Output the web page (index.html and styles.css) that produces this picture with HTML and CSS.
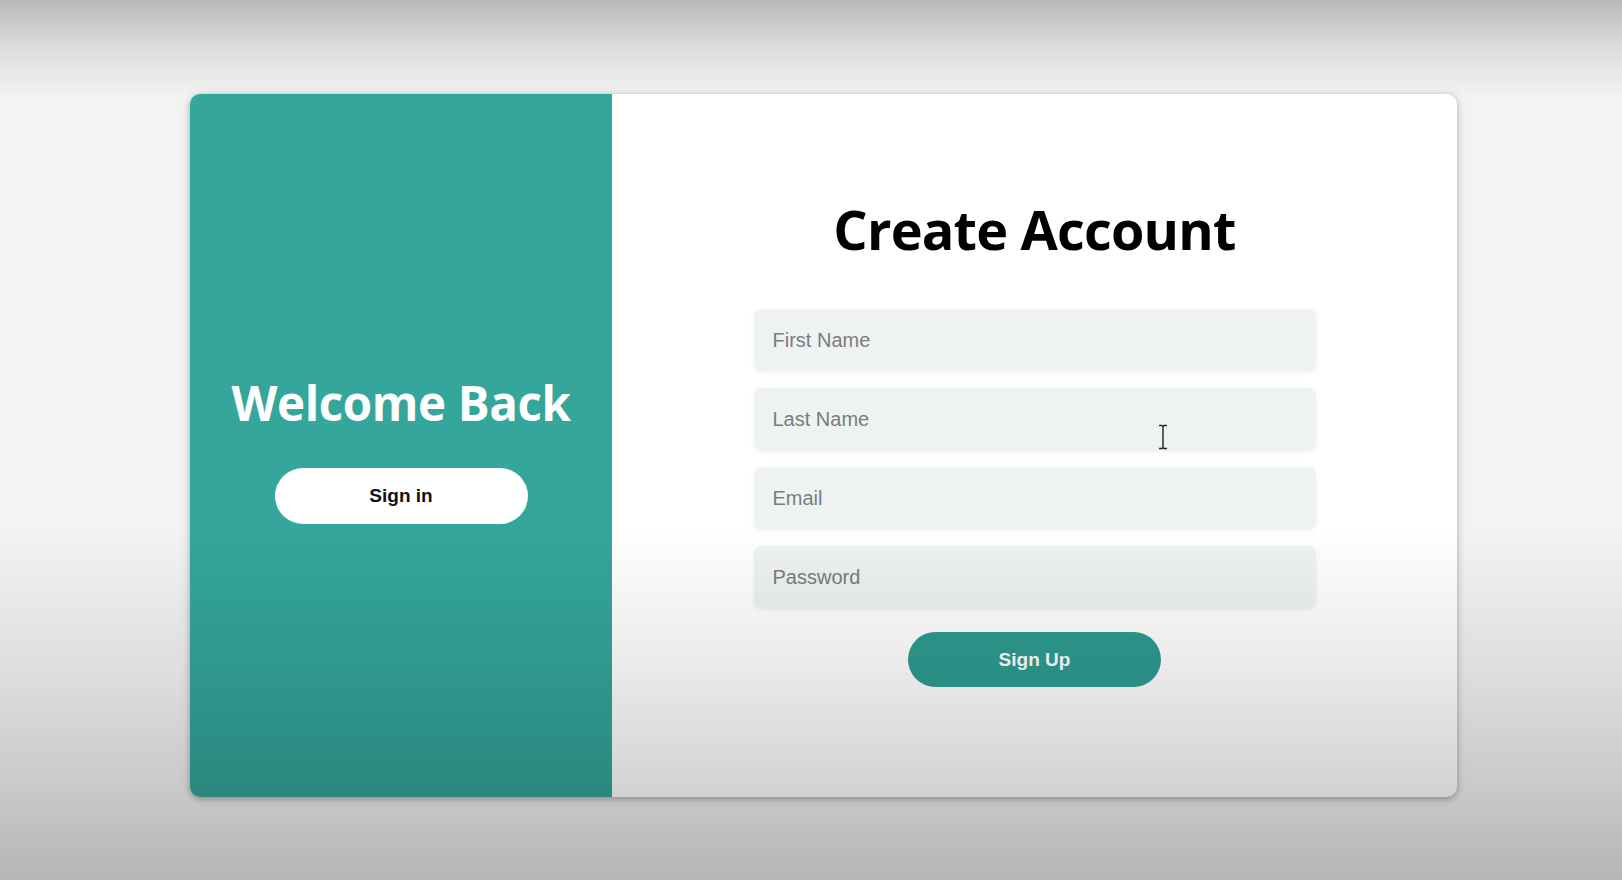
FILE: index.html
```html
<!DOCTYPE html>
<html lang="en">
<head>
<meta charset="utf-8">
<title>Create Account</title>
<link rel="stylesheet" href="styles.css">
</head>
<body>
<main class="stage">
  <section class="card">
    <div class="panel-left">
      <h2 class="welcome">Welcome Back</h2>
      <button class="btn-signin" type="button">Sign in</button>
    </div>
    <div class="panel-right">
      <h1 class="title">Create Account</h1>
      <form class="form">
        <input class="field" type="text" placeholder="First Name">
        <input class="field" type="text" placeholder="Last Name">
        <input class="field" type="email" placeholder="Email">
        <input class="field" type="password" placeholder="Password">
        <button class="btn-signup" type="button">Sign Up</button>
      </form>
    </div>
  </section>
</main>
<svg class="ibeam" width="10" height="26" viewBox="0 0 10 26" aria-hidden="true">
  <path d="M1 1.5h3l1 1 1-1h3M5 2.5v21M1 24.5h3l1-1 1 1h3" fill="none" stroke="#222" stroke-width="1.4"/>
</svg>
<div class="vignette"></div>
</body>
</html>
```

FILE: styles.css
```css
* { box-sizing: border-box; }

html, body {
  margin: 0;
  height: 880px;
  overflow: hidden;
}

body {
  background: #f3f3f3;
  font-family: "Liberation Sans", Arial, sans-serif;
}

.stage {
  display: flex;
  padding: 94px 0 0 190px;
}

.card {
  display: flex;
  width: 1267px;
  height: 703px;
  background: #ffffff;
  border-radius: 10px;
  overflow: hidden;
  box-shadow: 0 2px 6px rgba(0, 0, 0, 0.28), 0 0 14px rgba(0, 0, 0, 0.06);
}

.panel-left {
  width: 422px;
  flex: none;
  background: #34a69b;
  display: flex;
  flex-direction: column;
  align-items: center;
  justify-content: center;
  padding-top: 12px;
}

.welcome {
  margin: 0 0 41px;
  color: #ffffff;
  font-family: "Open Sans", "Noto Sans", sans-serif;
  font-weight: 700;
  font-size: 47.5px;
  letter-spacing: -0.4px;
  line-height: 1;
}

.btn-signin {
  width: 253px;
  height: 56px;
  border: none;
  border-radius: 28px;
  background: #ffffff;
  color: #111;
  font-family: "Liberation Sans", Arial, sans-serif;
  font-weight: 700;
  font-size: 19px;
}

.panel-right {
  flex: 1;
  display: flex;
  flex-direction: column;
  align-items: center;
  padding-top: 106px;
}

.title {
  margin: 0 0 50px;
  color: #000;
  font-family: "Open Sans", "Noto Sans", sans-serif;
  font-weight: 700;
  font-size: 54px;
  letter-spacing: -0.8px;
  line-height: 1.1;
}

.form {
  display: flex;
  flex-direction: column;
  align-items: center;
  gap: 16px;
}

.field {
  width: 562px;
  height: 63px;
  border: none;
  border-radius: 8px;
  background: #eef2f1;
  padding: 0 19px;
  font-family: "Liberation Sans", Arial, sans-serif;
  font-size: 20px;
  color: #333;
  box-shadow: 0 1px 6px rgba(0, 0, 0, 0.05);
}

.field::placeholder {
  color: #7a7d7d;
}

.btn-signup {
  margin-top: 7px;
  width: 253px;
  height: 55px;
  border: none;
  border-radius: 28px;
  background: #2f9c91;
  color: #ffffff;
  font-family: "Liberation Sans", Arial, sans-serif;
  font-weight: 700;
  font-size: 19px;
}

.ibeam {
  position: absolute;
  left: 1158px;
  top: 424px;
}

.vignette {
  position: fixed;
  inset: 0;
  pointer-events: none;
  background: linear-gradient(
    to bottom,
    rgba(0, 0, 0, 0.24) 0%,
    rgba(0, 0, 0, 0.1) 5%,
    rgba(0, 0, 0, 0) 11%,
    rgba(0, 0, 0, 0) 60%,
    rgba(0, 0, 0, 0.08) 75%,
    rgba(0, 0, 0, 0.16) 88%,
    rgba(0, 0, 0, 0.25) 100%
  );
}
```
